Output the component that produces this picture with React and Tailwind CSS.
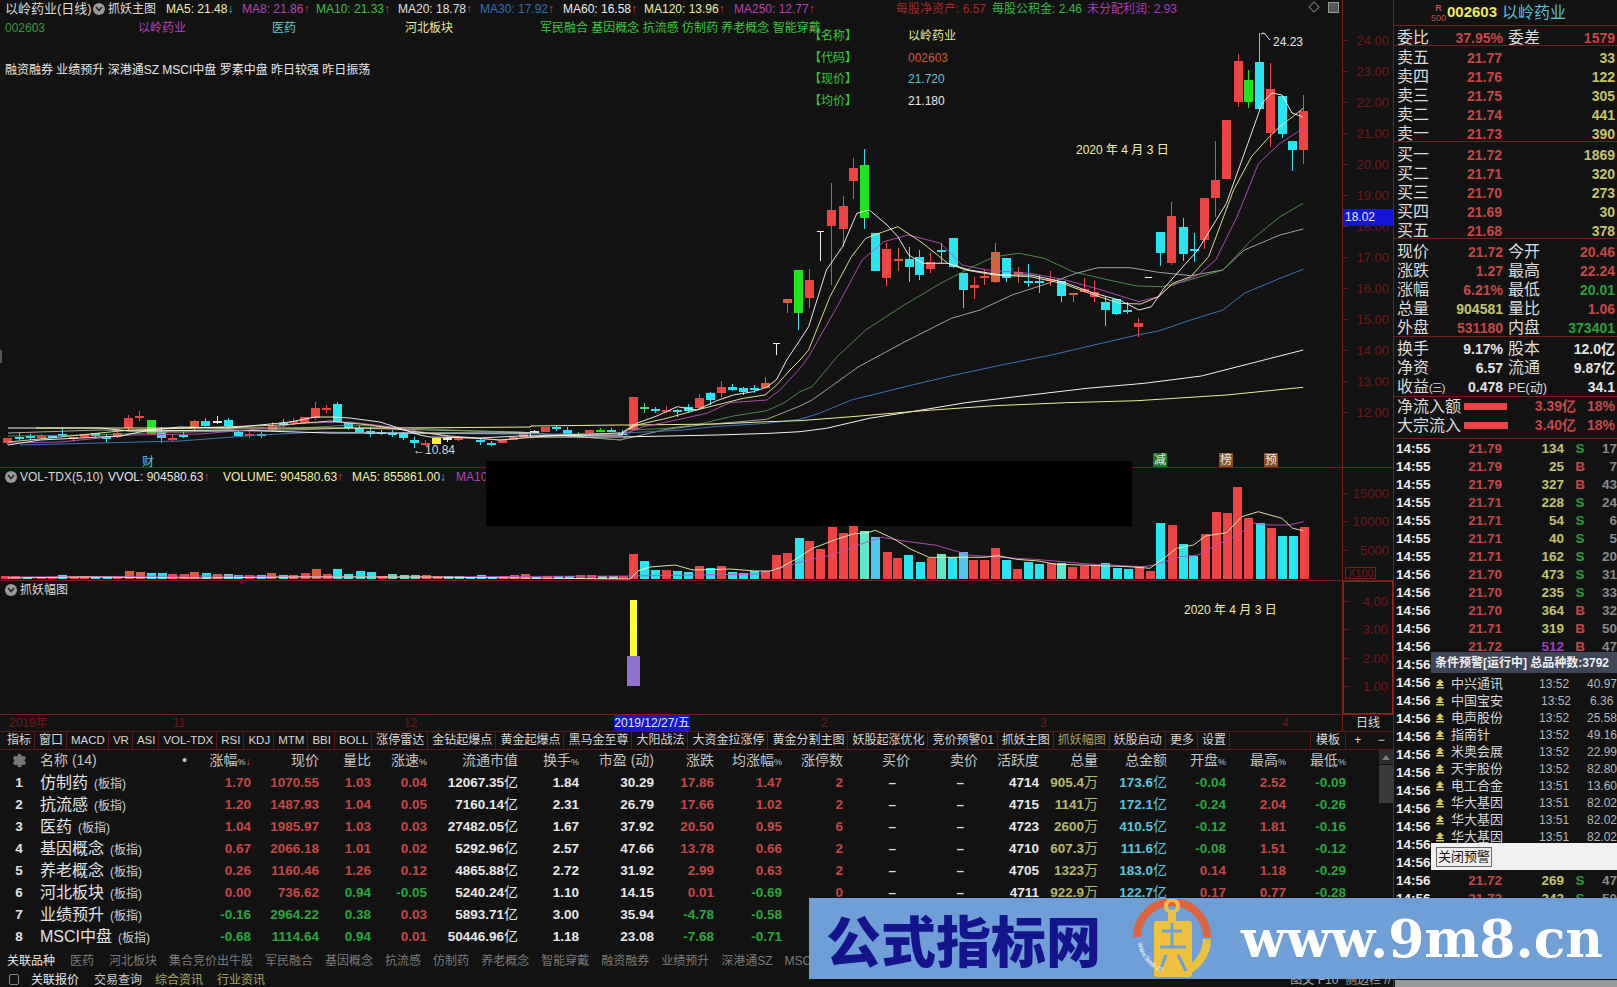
import React from 'react';
import { Settings } from 'lucide-react';

const R = '#f04444', C = '#28e6f0', G = '#1ee61e', W = '#e8e8e8', Y = '#ffee33', O = '#d8603c';

const leftCandles = [
  [21,128,145,128,150,R],[57,125,127,115,135,C],[90,124,127,118,135,C],[122,124,126,116,132,R],[155,122,128,122,128,C],[187,117,120,100,125,C],
  [220,125,132,125,142,O],[252,118,126,116,128,R],[285,114,124,114,126,C],[318,125,127,118,140,C],[352,115,127,112,130,R],[385,70,100,60,104,R],
  [418,64,66,48,78,R],[452,75,118,75,118,G],[484,112,130,97,145,C],[517,129,131,120,140,R],[550,119,121,112,128,C],[583,78,100,75,105,O],
  [616,78,92,70,95,C],[650,77,79,62,88,W],[683,76,93,70,98,C],[715,110,122,104,126,C],[748,117,119,105,130,R],[782,118,120,110,128,C],
  [815,92,105,82,108,O],[848,85,90,72,95,C],[880,79,81,70,90,R],[913,66,84,66,88,R],[946,40,70,20,75,R],
];
const midCandles = [
  [18,40,42,30,54,R],[52,28,80,20,85,C],[85,85,98,80,105,C],[118,98,110,92,114,C],[150,108,118,97,125,C],[183,112,114,105,120,C],[217,114,116,105,125,C],
  [250,115,128,110,135,C],[283,135,145,125,160,C],[315,144,146,135,152,R],[349,128,147,128,147,Y],[382,130,132,125,140,W],[415,129,131,122,138,R],[481,135,142,130,150,C],
  [513,144,146,138,152,C],[547,136,145,136,145,R],[578,125,135,125,135,R],[610,112,125,112,125,O],[643,109,111,104,116,W],[676,97,112,97,112,R],
  [709,97,99,90,108,C],[742,105,118,97,122,C],[775,119,122,112,126,G],[808,105,115,105,118,R],[841,104,106,98,112,G],[873,104,106,98,112,C],[906,114,116,106,122,C],
];
const z12Candles = [
  [100,350,450,350,450,R],[133,381,383,368,398,'#5fd07f'],[166,386,394,382,398,C],[199,389,391,378,398,R],[232,391,393,388,410,C],[265,382,394,372,400,C],
  [298,355,385,343,385,R],[331,340,360,335,375,C],[364,322,340,303,352,R],[397,320,330,312,332,C],[430,325,335,322,345,C],[463,324,326,315,338,C],[496,310,325,292,325,O],
];
const z7Candles = [
  [20,598,608,598,640,O],[51,510,638,510,690,G,C],[82,540,594,508,625,R],[144,330,378,248,555,R],[175,318,386,288,440,R],[205,204,242,174,296,R],[236,195,353,146,387,G,C],
  [267,400,513,400,513,C],[298,447,533,430,558,R],[329,477,479,445,512,O],[360,477,500,440,547,C],[390,471,524,450,540,C],[421,486,507,460,520,R],[452,449,451,428,488,C],
  [483,415,500,415,505,C],[511,519,570,519,624,C],[542,556,564,530,597,R],[572,528,534,510,555,R],[603,457,546,428,550,O],[634,475,533,475,545,C],[665,515,517,500,550,O],
  [695,543,547,492,560,C],[726,543,547,525,580,C],[757,538,540,512,558,R],[788,543,588,543,606,C],[819,580,586,580,606,O],[850,567,575,533,578,R],[880,575,591,543,605,R],
  [911,606,630,590,678,C],[942,598,642,598,645,C],[972,630,635,605,642,C],[1003,670,681,655,710,R],[1065,396,458,396,497,C],[1096,349,490,305,495,R],[1127,382,462,355,482,C],
  [1158,448,452,400,487,C],[1188,294,420,294,446,R],[1219,240,294,122,350,R],[1250,60,237,60,237,R],
];
const z2Candles = [
  [840,183,305,162,320,R],[860,240,305,210,325,G],[881,186,327,100,330,C],[902,267,398,188,442,R],[924,287,402,287,415,C],[945,422,450,422,513,C],[966,333,450,285,492,R],
];
const candles = [
  ...leftCandles.map(([x,t,b,h,l,c]) => [x/3,395+t/3,395+b/3,395+h/3,395+l/3,c,c]),
  ...midCandles.map(([x,t,b,h,l,c]) => [320+x/3,395+t/3,395+b/3,395+h/3,395+l/3,c,c]),
  ...z12Candles.map(([x,t,b,h,l,c]) => [600+x/3,280+t/3,280+b/3,280+h/3,280+l/3,c,c]),
  ...z7Candles.map(([x,t,b,h,l,c,w]) => [780+x/2.8,100+t/3,100+b/3,100+h/3,100+l/3,c,w||c]),
  ...z2Candles.map(([x,t,b,h,l,c]) => [800+x/1.919,t/3,b/3,h/3,l/3,c,c]),
];

const mk = (left, z12, z7, tail = []) => [
  ...left,
  ...z12.map(([x,y]) => [600+x/3,280+y/3]),
  ...z7.map(([x,y]) => [780+x/2.8,100+y/3]).filter(([x]) => x > 800),
  ...tail,
];
const lines = [
  { c:'#c8c8c8', w:0.8, p: mk([[8,433],[100,430],[180,432],[290,430],[350,428],[430,430],[520,432],[620,440]],[[200,448],[300,435],[420,425],[500,418],[550,398],[600,378]],[[90,900],[220,800],[350,725],[480,655],[560,630],[650,585],[750,550],[830,520],[890,503],[980,503],[1060,517],[1150,527],[1240,510],[1300,450],[1400,405],[1465,387]]) },
  { c:'#58a858', w:0.8, p: mk([[8,436],[100,435],[170,432],[270,430],[350,425],[450,430],[530,433],[622,440]],[[100,450],[200,445],[300,432],[400,408],[500,392],[550,370],[600,335]],[[90,860],[160,770],[240,690],[340,620],[450,550],[540,500],[600,470],[670,460],[740,475],[820,515],[920,540],[1000,558],[1070,560],[1130,545],[1240,510],[1320,420],[1400,350],[1465,310]]) },
  { c:'#3f74b8', w:1, p: mk([[20,445],[100,443],[180,441],[260,435],[320,432],[400,433],[500,434],[600,434]],[[40,460],[150,455],[250,450],[340,440],[500,430],[600,418]],[[110,940],[200,900],[370,855],[490,825],[620,795],[760,765],[900,730],[1000,705],[1060,693],[1150,660],[1240,630],[1300,580],[1400,535],[1465,508]]) },
  { c:'#f2f2f2', w:1, p: mk([[8,428],[100,428],[130,431],[230,430],[330,433],[530,433],[531,437],[620,437]],[[100,470],[350,465],[510,460],[600,455]],[[130,985],[250,955],[380,933],[520,908],[700,885],[860,865],[1020,850],[1180,828],[1300,795],[1465,750]]) },
  { c:'#eded90', w:1, p: mk([[36,428],[200,428],[400,428],[530,427],[531,426],[620,425]],[[100,435],[350,432],[500,425],[600,422]],[[200,950],[400,932],[600,917],[800,908],[1000,902],[1250,885],[1465,862]]) },
  { c:'#c050c0', w:0.9, p: mk([[8,443],[60,442],[130,435],[200,434],[270,428],[300,423],[350,422],[400,428],[450,437],[500,440],[550,435],[622,436]],[[70,462],[130,440],[230,420],[320,400],[390,368],[500,360],[540,330],[600,265]],[[80,770],[160,620],[230,480],[290,425],[360,405],[450,430],[510,495],[580,510],[700,520],[800,540],[900,570],[1005,605],[1060,590],[1090,560],[1170,525],[1220,480],[1280,350],[1340,190],[1400,130],[1465,85]]) },
  { c:'#f0f0a0', w:0.9, p: mk([[8,442],[60,437],[130,430],[190,428],[280,425],[330,421],[370,425],[410,431],[450,436],[500,440],[560,435],[620,433]],[[70,458],[110,435],[200,415],[290,390],[370,370],[430,355],[495,345],[530,315],[570,270],[600,240]],[[80,750],[140,590],[200,470],[240,415],[290,395],[330,380],[400,430],[470,490],[520,510],[600,525],[700,530],[790,550],[880,585],[950,610],[1010,612],[1060,590],[1100,550],[1150,530],[1200,470],[1270,270],[1320,170],[1370,110],[1400,80],[1465,25]]) },
  { c:'#ffffff', w:0.9, p: mk([[8,445],[40,440],[80,438],[120,436],[150,430],[180,427],[230,428],[290,422],[315,417],[333,417],[350,418],[380,422],[420,435],[430,437],[480,438],[520,436],[600,435],[622,435]],[[70,455],[110,430],[170,408],[232,380],[290,390],[350,362],[400,345],[460,335],[500,322],[530,298],[560,240],[600,180]],[[80,680],[130,510],[175,440],[215,340],[250,330],[300,375],[330,410],[360,465],[400,490],[470,490],[530,510],[620,525],[700,525],[790,545],[880,580],[950,600],[1005,630],[1040,620],[1075,565],[1120,510],[1170,450],[1250,310],[1310,130],[1350,10]],[[1272,93],[1282,95],[1292,113],[1303,117]]) },
];
const pts = (a) => a.map(([x,y]) => `${x.toFixed(1)},${y.toFixed(1)}`).join(' ');

const priceTicks = [41,74,103,135,164,197,227,258,288,319,349,382,412];

function MainChart() {
  return (
    <svg viewBox="0 0 1342 467" className="block w-[1342px] h-[467px]">
      {priceTicks.map((y) => <line key={y} x1="0" x2="1342" y1={y+0.5} y2={y+0.5} stroke="#2c1414" strokeDasharray="1 5" />)}
      {candles.map(([x,t,b,h,l,c,w],i) => {
        const rx = Math.round(x);
        return (
          <g key={i} shapeRendering="crispEdges">
            <line x1={rx+0.5} x2={rx+0.5} y1={h} y2={l} stroke={w} />
            <rect x={rx-4} y={t} width="9" height={Math.max(b-t,2)} fill={c} />
          </g>
        );
      })}
      <g stroke="#eee" shapeRendering="crispEdges">
        <line x1="817" x2="824" y1="231" y2="231" /><line x1="820.5" x2="820.5" y1="231" y2="261" />
        <line x1="773" x2="780" y1="343.5" y2="343.5" /><line x1="776.5" x2="776.5" y1="343" y2="355" />
        <line x1="1145" x2="1152" y1="277.5" y2="277.5" />
      </g>
      {lines.map((l,i) => <polyline key={i} points={pts(l.p)} fill="none" stroke={l.c} strokeWidth={l.w} />)}
      <polyline points="1261,34 1264,33 1270,40" fill="none" stroke="#eee" />
    </svg>
  );
}

const volEarly = [[9,588,R],[30,587,R],[52,590,C],[80,590,R],[102,590,R],[122,586,C],[145,590,R],[165,589,R],[187,590,C],[209,590,C],[230,590,R],[252,573,O],[274,576,O],[295,580,C],[317,580,C],[338,582,R],[360,582,R],[381,577,O],[403,579,C],[425,582,O],[446,583,'#5fd8c0'],[467,584,C],[489,586,R],[511,586,C],[532,580,O],[554,586,C],[575,586,O],[597,580,R],[619,567,O],[640,582,R],[661,567,C],[683,582,C],[705,573,C],[727,576,C],[748,588,R],[769,582,'#5fd8c0'],[791,586,'#5fd8c0'],[813,586,'#5fd8c0'],[835,584,O],[856,588,O],[878,589,'#5fd8c0'],[900,589,'#5fd8c0'],[921,590,C],[942,586,C],[964,590,C],[986,588,R],[1007,585,O],[1029,583,O],[1050,590,C],[1072,588,R],[1093,587,C],[1115,587,C],[1136,586,R],[1158,586,R],[1179,589,'#7fe0b0'],[1201,589,'#7fe0b0'],[1222,587,R]].map(([x,y,c]) => [x/1.96,380+y/3,c]);
const volMid = [[633,522,R],[644,543,C],[655,570,C],[666,570,R],[677,572,C],[688,576,C],[699,558,R],[710,565,C],[721,558,R],[732,575,C],[743,578,C],[754,574,C],[765,572,R],[776,525,R]].map(([x,y,c]) => [x,380+y/3,c]);
const volLate = [[20,280,R],[51,235,C],[81,244,R],[111,268,R],[142,202,R],[172,220,R],[202,198,R],[232,214,'#5fe8c8'],[262,232,'#4fc8f0'],[293,277,R],[323,295,R],[353,285,C],[384,307,C],[414,293,R],[444,282,'#5fe8c8'],[474,292,C],[502,277,'#4fc8f0'],[532,300,R],[562,300,R],[592,265,R],[622,300,C],[653,328,R],[683,306,C],[713,312,C],[744,308,R],[774,310,'#5fe8c8'],[804,322,R],[835,318,R],[865,316,R],[895,310,C],[926,324,C],[956,328,C],[987,318,R],[1017,334,R],[1046,190,C],[1077,195,R],[1107,253,C],[1137,287,C],[1168,223,R],[1198,156,R],[1228,160,R],[1258,82,R],[1288,174,R],[1320,188,C],[1350,205,R],[1380,228,C],[1410,228,C],[1440,202,R]].map(([x,y,c]) => [780+x/2.75,460+y/3,c]);
const vols = [...volEarly,...volMid,...volLate];
const volY = [[8,578],[80,577],[200,578],[300,577],[420,577],[520,578],[630,579],[638,571],[650,567],[675,565],[693,570],[730,569],[755,571],[770,571]];
const toV = (a) => a.map(([x,y]) => [780+x/2.75,460+y/3]);
const volYellow = [...volY,...toV([[0,323],[40,300],[90,265],[150,240],[200,222],[240,218],[262,211],[310,235],[360,268],[410,292],[480,292],[560,292],[600,287],[650,298],[710,303],[760,313],[850,316],[960,320],[1017,325],[1050,300],[1090,265],[1137,255],[1170,228],[1228,218],[1270,170],[1315,155],[1380,175],[1410,205],[1440,212]])];
const volMag = [[8,577],[200,576],[400,577],[630,576],[760,574],...toV([[0,325],[60,305],[150,283],[240,245],[280,232],[340,243],[430,256],[520,285],[600,292],[700,298],[850,312],[1000,320],[1030,315],[1100,290],[1150,285],[1200,255],[1260,225],[1300,190],[1350,195],[1400,195],[1440,185]])];

function VolChart() {
  return (
    <svg viewBox="0 468 1342 112" className="block w-[1342px] h-[112px]">
      {[493,522,550].map((y) => <line key={y} x1="0" x2="1342" y1={y+0.5} y2={y+0.5} stroke="#2c1414" strokeDasharray="1 5" />)}
      {vols.map(([x,y,c],i) => <rect key={i} x={Math.round(x)-4} y={y} width="9" height={579-y} fill={c} shapeRendering="crispEdges" />)}
      <polyline points={pts(volMag)} fill="none" stroke="#c050c0" strokeWidth="0.9" />
      <polyline points={pts(volYellow)} fill="none" stroke="#f4f4b0" strokeWidth="0.9" />
    </svg>
  );
}

function IndChart() {
  return (
    <svg viewBox="0 581 1342 133" className="block w-[1342px] h-[133px]">
      {[600,629,657,685].map((y) => <line key={y} x1="0" x2="1342" y1={y+0.5} y2={y+0.5} stroke="#2c1414" strokeDasharray="1 5" />)}
      <rect x="630" y="600" width="7" height="56" fill="#ffff33" shapeRendering="crispEdges" />
      <rect x="627" y="656" width="13" height="30" fill="#9070d0" shapeRendering="crispEdges" />
    </svg>
  );
}

const Dot = () => (
  <span className="w-[12px] h-[12px] rounded-full bg-[#9a9a9a] shrink-0 flex items-center justify-center">
    <svg width="8" height="6" viewBox="0 0 8 6"><polyline points="1,1 4,4.5 7,1" fill="none" stroke="#222" strokeWidth="1.5" /></svg>
  </span>
);
const Up = () => <span className="text-[#d04040]">↑</span>;
const Down = () => <span className="text-[#40c8e0]">↓</span>;

function AxisLabel({ children, tall }) {
  return (
    <div className={`flex items-center justify-between pr-[4px] text-[13px] text-[#701717] ${tall ? 'h-[28.5px]' : 'h-[31px]'}`}>
      <span className="w-[5px] h-px bg-[#701717]" />
      <span>{children}</span>
    </div>
  );
}

const tabs = ['指标','窗口','MACD','VR','ASI','VOL-TDX','RSI','KDJ','MTM','BBI','BOLL','涨停雷达','金钻起爆点','黄金起爆点','黑马金至尊','大阳战法','大资金拉涨停','黄金分割主图','妖股起涨优化','竞价预警01','抓妖主图','抓妖幅图','妖股启动','更多','设置'];

const rows = [
  ['仿制药','1.70','1070.55','1.03','0.04','12067.35','1.84','30.29','17.86','1.47','2','4714','905.4','173.6','-0.04','2.52','-0.09'],
  ['抗流感','1.20','1487.93','1.04','0.05','7160.14','2.31','26.79','17.66','1.02','2','4715','1141','172.1','-0.24','2.04','-0.26'],
  ['医药','1.04','1985.97','1.03','0.03','27482.05','1.67','37.92','20.50','0.95','6','4723','2600','410.5','-0.12','1.81','-0.16'],
  ['基因概念','0.67','2066.18','1.01','0.02','5292.96','2.57','47.66','13.78','0.66','2','4710','607.3','111.6','-0.08','1.51','-0.12'],
  ['养老概念','0.26','1160.46','1.26','0.12','4865.88','2.72','31.92','2.99','0.63','2','4705','1323','183.0','0.14','1.18','-0.29'],
  ['河北板块','0.00','736.62','0.94','-0.05','5240.24','1.10','14.15','0.01','-0.69','0','4711','922.9','122.7','0.17','0.77','-0.28'],
  ['业绩预升','-0.16','2964.22','0.38','0.03','5893.71','3.00','35.94','-4.78','-0.58','','','','','','',''],
  ['MSCI中盘','-0.68','1114.64','0.94','0.01','50446.96','1.18','23.08','-7.68','-0.71','','','','','','',''],
];
const sign = (v) => (v.startsWith('-') ? 'text-[#28a83c]' : 'text-[#c84646]');
const headers = ['涨幅%','现价','量比','涨速%','流通市值','换手%','市盈 (动)','涨跌','均涨幅%','涨停数','买价','卖价','活跃度','总量','总金额','开盘%','最高%','最低%'];
const tableCols = 'grid grid-cols-[30px_165px_56px_68px_52px_56px_91px_61px_75px_60px_68px_61px_67px_68px_61px_59px_69px_59px_60px_60px]';

function Head({ h, first }) {
  const pct = h.endsWith('%');
  return (
    <div>
      {pct ? h.slice(0,-1) : h}
      {pct && <span className="text-[9px]">%</span>}
      {first && <span className="text-[#d04040] text-[11px]">↓</span>}
    </div>
  );
}

function Table() {
  return (
    <div className="flex h-[197px]">
      <div className="w-[1379px] text-[14px]">
        <div className={`${tableCols} h-[21px] items-center text-[#c4c4c4] text-right`}>
          <div className="flex justify-center pl-[8px]"><Settings size={15} fill="#777" stroke="#777" /></div>
          <div className="text-left pl-[10px] flex justify-between pr-[8px]"><span>名称 (14)</span><span>•</span></div>
          {headers.map((h,i) => <Head key={h} h={h} first={i === 0} />)}
        </div>
        {rows.map((r,i) => {
          const [name,chg,price,lb,speed,mv,turn,pe,diff,avg,lim,act,vol,amt,op,hi,lo] = r;
          const isIn = lim !== '';
          return (
            <div key={name} className={`${tableCols} h-[22px] items-center text-right whitespace-nowrap font-bold text-[13.5px]`}>
              <div className="text-center pl-[8px] text-[#e4e4e4]">{i+1}</div>
              <div className="text-left pl-[10px] text-[#e4e4e4] text-[16px] font-normal">{name}<span className="text-[12px] ml-[6px] text-[#cfcfcf]">(板指)</span></div>
              <div className={sign(chg)}>{chg}</div>
              <div className={sign(chg)}>{price}</div>
              <div className={parseFloat(lb) >= 1 ? 'text-[#c84646]' : 'text-[#28a83c]'}>{lb}</div>
              <div className={sign(speed)}>{speed}</div>
              <div className="text-[#e8e8e8]">{mv}<span className="font-normal text-[14px]">亿</span></div>
              <div className="text-[#e8e8e8]">{turn}</div>
              <div className="text-[#e8e8e8]">{pe}</div>
              <div className={sign(diff)}>{diff}</div>
              <div className={sign(avg)}>{avg}</div>
              <div className="text-[#c84646]">{lim}</div>
              <div className="text-[#dddddd] pr-[14px]">{isIn ? '–' : ''}</div>
              <div className="text-[#dddddd] pr-[14px]">{isIn ? '–' : ''}</div>
              <div className="text-[#e8e8e8]">{act}</div>
              <div className="text-[#b8b86c]">{isIn ? <>{vol}<span className="font-normal text-[14px]">万</span></> : ''}</div>
              <div className="text-[#58c8dc]">{isIn ? <>{amt}<span className="font-normal text-[14px]">亿</span></> : ''}</div>
              <div className={isIn ? sign(op) : ''}>{op}</div>
              <div className={isIn ? sign(hi) : ''}>{hi}</div>
              <div className={isIn ? sign(lo) : ''}>{lo}</div>
            </div>
          );
        })}
      </div>
      <div className="w-[14px] h-[53px] flex flex-col bg-[#3a3a3a]">
        <div className="h-[15px] bg-[#2c2c2c] flex items-center justify-center border-b border-[#111]">
          <svg width="8" height="5" viewBox="0 0 8 5"><polygon points="4,0 8,5 0,5" fill="#777" /></svg>
        </div>
      </div>
    </div>
  );
}

const bottomTabs = ['医药','河北板块','集合竞价出牛股','军民融合','基因概念','抗流感','仿制药','养老概念','智能穿戴','融资融券','业绩预升','深港通SZ','MSCI中盘'];

const sells = [['卖五','21.77','33'],['卖四','21.76','122'],['卖三','21.75','305'],['卖二','21.74','441'],['卖一','21.73','390']];
const buys = [['买一','21.72','1869'],['买二','21.71','320'],['买三','21.70','273'],['买四','21.69','30'],['买五','21.68','378']];
const trades = [
  ['14:55','21.79','134','S','17'],['14:55','21.79','25','B','7'],['14:55','21.79','327','B','43'],['14:55','21.71','228','S','24'],['14:55','21.71','54','S','6'],['14:55','21.71','40','S','5'],['14:55','21.71','162','S','20'],
  ['14:56','21.70','473','S','31'],['14:56','21.70','235','S','33'],['14:56','21.70','364','B','32'],['14:56','21.71','319','B','50'],['14:56','21.72','512','B','47'],
  ...Array.from({length:12},() => ['14:56','','','','']),
  ['14:56','21.72','269','S','47'],['14:56','21.72','343','S','50'],
];
const alerts = [['中兴通讯','13:52','40.97'],['中国宝安','13:52','6.36'],['电声股份','13:52','25.58'],['指南针','13:52','49.16'],['米奥会展','13:52','22.99'],['天宇股份','13:52','82.80'],['电工合金','13:51','13.60'],['华大基因','13:51','82.02'],['华大基因','13:51','82.02'],['华大基因','13:51','82.02']];

const red = 'text-[#c84646]', yel = 'text-[#c4c46c]', grn = 'text-[#2aa03a]', wht = 'text-[#e4e4e4]';

function Stat({ a, av, ac, b, bv, bc }) {
  return (
    <div className="grid grid-cols-[40px_66px_45px_67px] pl-[3px] h-[19px] items-center whitespace-nowrap">
      <div className="text-[16px] text-[#dcdcdc] font-normal">{a}</div>
      <div className={`text-right ${ac}`}>{av}</div>
      <div className="pl-[5px] text-[16px] text-[#dcdcdc] font-normal">{b}</div>
      <div className={`text-right ${bc}`}>{bv}</div>
    </div>
  );
}

function QuotePanel() {
  return (
    <div className="w-[224px] h-[987px] border-l border-[#7a1c1c] text-[14px] font-bold flex flex-col overflow-hidden shrink-0">
      <div className="h-[26px] shrink-0 border-b border-[#7a1c1c] flex items-center pl-[37px] font-normal">
        <div className="flex flex-col items-center text-[9px] leading-[10px] text-[#b85050] w-[15px]"><span className="font-bold">R</span><span>500</span></div>
        <span className="ml-[1px] text-[#f0e860] font-bold text-[15px]">002603</span>
        <span className="ml-[5px] text-[16px] text-[#58c0d8]">以岭药业</span>
      </div>
      <div className="h-[20px] shrink-0 border-b border-[#7a1c1c]">
        <Stat a="委比" av="37.95%" ac={red} b="委差" bv="1579" bc={red} />
      </div>
      <div className="h-[96px] shrink-0 border-b border-[#7a1c1c]">
        {sells.map(([a,b,c]) => (
          <div key={a} className="grid grid-cols-[40px_65px_113px] pl-[3px] h-[19px] items-center">
            <div className="text-[16px] text-[#dcdcdc] font-normal">{a}</div><div className={`text-right ${red}`}>{b}</div><div className={`text-right ${yel}`}>{c}</div>
          </div>
        ))}
      </div>
      <div className="h-[97px] shrink-0 border-b border-[#7a1c1c] pt-[1px]">
        {buys.map(([a,b,c]) => (
          <div key={a} className="grid grid-cols-[40px_65px_113px] pl-[3px] h-[19px] items-center">
            <div className="text-[16px] text-[#dcdcdc] font-normal">{a}</div><div className={`text-right ${red}`}>{b}</div><div className={`text-right ${yel}`}>{c}</div>
          </div>
        ))}
      </div>
      <div className="h-[98px] shrink-0 border-b border-[#7a1c1c] pt-[1px]">
        <Stat a="现价" av="21.72" ac={red} b="今开" bv="20.46" bc={red} />
        <Stat a="涨跌" av="1.27" ac={red} b="最高" bv="22.24" bc={red} />
        <Stat a="涨幅" av="6.21%" ac={red} b="最低" bv="20.01" bc={grn} />
        <Stat a="总量" av="904581" ac={yel} b="量比" bv="1.06" bc={red} />
        <Stat a="外盘" av="531180" ac={red} b="内盘" bv="373401" bc={grn} />
      </div>
      <div className="h-[60px] shrink-0 border-b border-[#7a1c1c]">
        <Stat a="换手" av="9.17%" ac={wht} b="股本" bv="12.0亿" bc={wht} />
        <Stat a="净资" av="6.57" ac={wht} b="流通" bv="9.87亿" bc={wht} />
        <Stat a={<>收益<span className="text-[11px] tracking-[-1px]">(三)</span></>} av="0.478" ac={wht} b={<span className="text-[13px]">PE(动)</span>} bv="34.1" bc={wht} />
      </div>
      <div className="h-[42px] shrink-0 border-b border-[#7a1c1c]">
        {[['净流入额','3.39亿','w-[43px]'],['大宗流入','3.40亿','w-[44px]']].map(([a,b,w]) => (
          <div key={a} className="flex items-center h-[19px] pl-[3px] whitespace-nowrap">
            <span className="w-[67px] text-[16px] text-[#dcdcdc] font-normal">{a}</span>
            <span className={`${w} h-[7px] bg-[#f04444]`} />
            <span className={`flex-1 text-right ${red}`}>{b}</span>
            <span className={`w-[41px] text-right pr-[2px] ${red}`}>18%</span>
          </div>
        ))}
      </div>
      <div>
        {trades.map((t,i) => (
          <div key={i} className="grid grid-cols-[56px_50px_62px_32px_21px] pl-[2px] h-[18px] items-center text-[13.5px]">
            <div className="text-[#eeeeee]">{t[0]}</div>
            <div className={`text-right ${red}`}>{t[1]}</div>
            <div className={`text-right ${t[2] === '512' ? 'text-[#a040c8]' : yel}`}>{t[2]}</div>
            <div className={`text-center ${t[3] === 'S' ? grn : 'text-[#c84646]'}`}>{t[3]}</div>
            <div className="text-right text-[#8a8a8a]">{t[4]}</div>
          </div>
        ))}
      </div>
    </div>
  );
}

function Logo() {
  return (
    <svg width="80" height="80" viewBox="0 0 80 80" className="shrink-0">
      <path id="lg" d="M6 44 A34 34 0 0 0 32 73" fill="none" />
      <path d="M5 38 A35 35 0 0 1 75 38" fill="none" stroke="#dc6440" strokeWidth="8" />
      <path d="M75 40 A35 35 0 0 1 48 74" fill="none" stroke="#eec23e" strokeWidth="8" />
      <circle cx="40" cy="7" r="6" fill="none" stroke="#eec23e" strokeWidth="4" />
      <rect x="36" y="12" width="8" height="10" fill="#eec23e" />
      <rect x="22" y="22" width="38" height="56" rx="3" fill="#eec23e" />
      <path d="M30 32 H50 M40 24 V48 M28 48 H54 M34 56 L28 72 M46 56 L54 72" stroke="#6e9fd6" strokeWidth="3" fill="none" />
      <text fontSize="7" fill="#fff"><textPath href="#lg">www.9m8.cn</textPath></text>
    </svg>
  );
}

export default function App() {
  return (
    <div className="relative w-[1617px] h-[987px] overflow-hidden bg-[#121212] flex text-[#e0e0e0] font-['Liberation_Sans','Noto_Sans_CJK_SC',sans-serif]">
      <div className="w-[1393px] flex flex-col shrink-0">
        {/* main chart */}
        <div className="h-[468px] flex border-b border-[#7a1c1c] shrink-0">
          <div className="relative w-[1342px] border-r border-[#7a1c1c] box-content">
            <MainChart />
            <div className="absolute left-0 top-0 w-full h-full text-[12px] pointer-events-none whitespace-nowrap">
              <div className="flex items-center h-[16px] mt-[1px] pl-[5px]">
                <span className="w-[88px] text-[13px] text-[#dcdcdc]">以岭药业(日线)</span>
                <span className="w-[15px]"><Dot /></span>
                <span className="w-[58px] text-[#dcdcdc]">抓妖主图</span>
                <span className="w-[76px] text-[#f0f0a8]">MA5: 21.48<Down /></span>
                <span className="w-[74px] text-[#b840b8]">MA8: 21.86<Up /></span>
                <span className="w-[82px] text-[#40c040]">MA10: 21.33<Up /></span>
                <span className="w-[82px] text-[#e0e0e0]">MA20: 18.78<Up /></span>
                <span className="w-[83px] text-[#3070c0]">MA30: 17.92<Up /></span>
                <span className="w-[81px] text-[#f0f0f0]">MA60: 16.58<Up /></span>
                <span className="w-[90px] text-[#f0f0a0]">MA120: 13.96<Up /></span>
                <span className="w-[162px] text-[#b840b8]">MA250: 12.77<Up /></span>
                <span className="w-[96px] text-[#a82828]">每股净资产: 6.57</span>
                <span className="w-[95px] text-[#38b848]">每股公积金: 2.46</span>
                <span className="text-[#b038b8]">未分配利润: 2.93</span>
              </div>
              <div className="flex items-center h-[22px] pl-[5px]">
                <span className="w-[133px] text-[#3a9a3a]">002603</span>
                <span className="w-[134px] text-[#b840b8]">以岭药业</span>
                <span className="w-[133px] text-[#60c8d0]">医药</span>
                <span className="w-[135px] text-[#e8e8a0]">河北板块</span>
                <span className="text-[#38c838]">军民融合 基因概念 抗流感 仿制药 养老概念 智能穿戴</span>
              </div>
              <div className="pl-[5px] mt-[22px] h-[18px] text-[#e8e8e8]">融资融券 业绩预升 深港通SZ MSCI中盘 罗素中盘 昨日较强 昨日振荡</div>
            </div>
            <div className="absolute left-[809px] top-[25px] grid grid-cols-[99px_60px] auto-rows-[21.7px] items-center text-[12px]">
              <span className="text-[#38c838]">【名称】</span><span className="text-[#e8e8a0]">以岭药业</span>
              <span className="text-[#38c838]">【代码】</span><span className="text-[#c85a38]">002603</span>
              <span className="text-[#38c838]">【现价】</span><span className="text-[#60c8d0]">21.720</span>
              <span className="text-[#38c838]">【均价】</span><span className="text-[#e8e8e8]">21.180</span>
            </div>
            <span className="absolute left-[1076px] top-[141px] text-[12px] text-[#f0f0b0]">2020 年 4 月 3 日</span>
            <span className="absolute left-[1273px] top-[33px] text-[12px] text-[#e8e8e8]">24.23</span>
            <span className="absolute left-[413px] top-[441px] text-[12px] text-[#d8d8d8]">←10.84</span>
            <span className="absolute left-[142px] top-[453px] text-[12px] text-[#60c0e8]">财</span>
            <span className="absolute left-[1153px] top-[453px] text-[12px] leading-[14px] px-[1px] bg-[#157a25] text-[#e8e8e8]">减</span>
            <span className="absolute left-[1219px] top-[453px] text-[12px] leading-[14px] px-[1px] bg-[#8a5020] text-[#e8e8e8]">榜</span>
            <span className="absolute left-[1264px] top-[453px] text-[12px] leading-[14px] px-[1px] bg-[#8a5020] text-[#e8e8e8]">预</span>
            <span className="absolute left-[1310px] top-[3px] w-[8px] h-[8px] rotate-45 border border-[#777]" />
            <span className="absolute left-[1328px] top-[2px] w-[11px] h-[11px] border border-[#999] bg-[#555]" />
            <span className="absolute left-0 top-[350px] w-[2px] h-[13px] bg-[#555]" />
          </div>
          <div className="relative flex-1 pt-[25px]">
            {priceTicks.map((y,i) => <AxisLabel key={y}>{(24-i).toFixed(2)}</AxisLabel>)}
            <span className="absolute left-0 top-[209px] w-full h-[17px] bg-[#1414d8] text-[12px] leading-[17px] text-[#e8e8ff] pl-[2px]">18.02</span>
          </div>
        </div>
        {/* volume */}
        <div className="h-[113px] flex border-b border-[#7a1c1c] shrink-0">
          <div className="relative w-[1342px] border-r border-[#7a1c1c] box-content">
            <VolChart />
            <div className="absolute left-[5px] top-0 h-[17px] flex items-center text-[12px] whitespace-nowrap">
              <span className="w-[15px]"><Dot /></span>
              <span className="w-[88px] text-[#d8d8d8]">VOL-TDX(5,10)</span>
              <span className="w-[115px] text-[#e8e8e8]">VVOL: 904580.63<Up /></span>
              <span className="w-[129px] text-[#f0f0a8]">VOLUME: 904580.63<Up /></span>
              <span className="w-[104px] text-[#f0f0a8]">MA5: 855861.00<Down /></span>
              <span className="text-[#b840b8]">MA10</span>
            </div>
            <div className="absolute left-[486px] top-[-7px] w-[646px] h-[65px] bg-black" />
          </div>
          <div className="relative flex-1 pt-[11px]">
            {[15000,10000,5000].map((v) => <AxisLabel key={v} tall>{v}</AxisLabel>)}
            <span className="absolute left-[2px] top-[99px] w-[31px] h-[12px] border border-[#7a1c1c] text-[11px] leading-[10px] text-[#701717] pl-[2px]">X100</span>
          </div>
        </div>
        {/* indicator */}
        <div className="h-[134px] flex border-b border-[#7a1c1c] shrink-0">
          <div className="relative w-[1342px] border-r border-[#7a1c1c] box-content">
            <IndChart />
            <div className="absolute left-[5px] top-0 h-[17px] flex items-center text-[12px]">
              <span className="w-[15px]"><Dot /></span>
              <span className="text-[#dcdcdc]">抓妖幅图</span>
            </div>
            <span className="absolute left-[1184px] top-[20px] text-[12px] text-[#f0f0b0]">2020 年 4 月 3 日</span>
          </div>
          <div className="flex-1 pt-[5px] border border-[#9a1c1c]">
            {['4.00','3.00','2.00','1.00'].map((v) => <AxisLabel key={v} tall>{v}</AxisLabel>)}
          </div>
        </div>
        {/* time axis */}
        <div className="h-[17px] shrink-0 flex items-center pl-[9px] text-[12px] text-[#701717] border-b border-[#5a1818]">
          <span className="w-[164px]">2019年</span>
          <span className="w-[231px]">11</span>
          <span className="w-[210px]">12</span>
          <span className="w-[76px] h-[16px] leading-[16px] bg-[#1414c8] text-[#e8e8ff] text-center whitespace-nowrap">2019/12/27/五</span>
          <span className="w-[131px]" />
          <span className="w-[219px]">2</span>
          <span className="w-[242px]">3</span>
          <span className="w-[60px]">4</span>
          <span className="flex-1 text-center text-[#dcdcdc] border-l border-[#7a1c1c]">日线</span>
        </div>
        {/* tabs */}
        <div className="h-[18px] shrink-0 flex items-center pl-[3px] text-[12px] text-[#d8d8d8] border-b border-[#5a1818] whitespace-nowrap">
          {tabs.map((t) => (
            <span key={t} className={`pl-[4px] pr-[3px] leading-[17px] border-r border-[#5a1818] ${t === '抓妖幅图' ? 'text-[#a8a060]' : ''} ${/^[A-Z-]+$/.test(t) ? 'text-[11.5px]' : ''}`}>{t}</span>
          ))}
          <span className="w-[81px] border-r border-[#5a1818] h-[17px]" />
          <span className="px-[5px] leading-[17px]">模板</span>
          <span className="flex-1 flex justify-around border-l border-[#5a1818] leading-[17px]"><span>+</span><span>−</span></span>
        </div>
        <Table />
        {/* bottom tabs */}
        <div className="h-[22px] mt-[3px] shrink-0 flex items-center pl-[7px] text-[12px] text-[#7c7c7c] gap-[12px] whitespace-nowrap">
          <span className="text-[#e8e8e8] mr-[3px]">关联品种</span>
          {bottomTabs.map((t) => <span key={t} className={t === '医药' ? 'mr-[3px]' : ''}>{t}</span>)}
        </div>
        <div className="h-[15px] shrink-0 flex items-center text-[12px] pl-[9px] whitespace-nowrap">
          <span className="w-[10px] h-[11px] rounded-[2px] border border-[#888] mr-[12px]" />
          <span className="text-[#e8e8e8] mr-[15px]">关联报价</span>
          <span className="text-[#c8c8c8] mr-[13px]">交易查询</span>
          <span className="text-[#a8a860] mr-[14px]">综合资讯</span>
          <span className="text-[#a8a860]">行业资讯</span>
          <span className="ml-auto mr-[2px] text-[#aaa]">图文 F10 &nbsp;侧边栏 //</span>
        </div>
      </div>

      <QuotePanel />

      {/* alert popup */}
      <div className="absolute left-[1431px] top-[652px] w-[186px] h-[218px] flex flex-col bg-[#121212] text-[12px] overflow-hidden">
        <div className="h-[21px] shrink-0 bg-[#3e4657] text-[#f0f0f0] font-bold flex items-center pl-[4px] whitespace-nowrap">条件预警[运行中] 总品种数:3792</div>
        <div className="flex-1 pt-[2px] overflow-hidden">
          {alerts.map(([n,t,v],i) => (
            <div key={i} className="flex items-center h-[17px] whitespace-nowrap text-[#b8b8b8]">
              <svg width="10" height="10" viewBox="0 0 10 10" className="ml-[4px] mr-[6px] shrink-0"><path d="M5 0L9 4H1Z M5 3L9 7H1Z M1 8H9V9.5H1Z" fill="#d8c860" /></svg>
              <span className="w-[90px] text-[13px] text-[#d8d8d8]">{n}</span>
              <span className="w-[49px]">{t}</span>
              <span>{v}</span>
            </div>
          ))}
        </div>
        <div className="h-[27px] shrink-0 bg-[#f0f0f0] flex items-center pl-[5px]">
          <span className="w-[56px] h-[20px] border border-[#666] bg-[#eee] text-[13px] leading-[18px] text-center text-[#111]">关闭预警</span>
        </div>
      </div>

      <div className="absolute left-[1395px] top-[980px] w-[222px] h-[7px] bg-[#9a9a9a]" />

      {/* watermark */}
      <div className="absolute left-[809px] top-[898px] w-[808px] h-[81px] bg-[#6e9fd6] flex items-center whitespace-nowrap overflow-hidden">
        <span className="ml-[17px] w-[280px] text-[55px] leading-none font-black text-[#14148c] font-['Noto_Sans_CJK_SC',sans-serif]">公式指标网</span>
        <span className="ml-[26px]"><Logo /></span>
        <span className="ml-[29px] text-[52px] leading-none font-bold text-white font-['DejaVu_Serif',serif]">www.9m8.cn</span>
      </div>
    </div>
  );
}
